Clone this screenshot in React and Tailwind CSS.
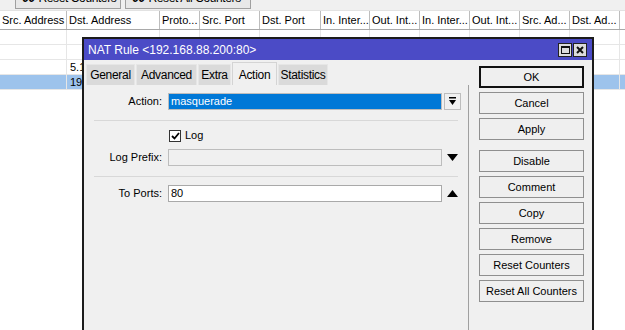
const COLS = [
  { w: 67, t: 'Src. Address' },
  { w: 93, t: 'Dst. Address' },
  { w: 40, t: 'Proto...' },
  { w: 60, t: 'Src. Port' },
  { w: 61, t: 'Dst. Port' },
  { w: 49, t: 'In. Inter...' },
  { w: 50, t: 'Out. Int...' },
  { w: 50, t: 'In. Inter...' },
  { w: 50, t: 'Out. Int...' },
  { w: 50, t: 'Src. Ad...' },
  { w: 50, t: 'Dst. Ad...' },
  { w: 30, t: '' },
];

const ROWS = [
  { dst: '', sel: false },
  { dst: '', sel: false },
  { dst: '5.1', sel: false },
  { dst: '19', sel: true },
];

const TABS = [
  { t: 'General', w: 49 },
  { t: 'Advanced', w: 61 },
  { t: 'Extra', w: 33 },
  { t: 'Action', w: 45, active: true },
  { t: 'Statistics', w: 50 },
];

const BUTTONS = [
  ['OK', 'Cancel', 'Apply'],
  ['Disable', 'Comment', 'Copy', 'Remove', 'Reset Counters', 'Reset All Counters'],
];

function Label({ children }) {
  return <div className="w-[78px] shrink-0 text-right">{children}</div>;
}

function Tri({ up }) {
  return (
    <svg width="11" height="7" viewBox="0 0 11 7" className="ml-[5px]">
      <path d={up ? 'M0 7 L5.5 0 L11 7 Z' : 'M0 0 L11 0 L5.5 7 Z'} fill="#000" />
    </svg>
  );
}

export default function App() {
  return (
    <div className="relative w-[625px] h-[330px] overflow-hidden bg-white text-[11px] text-black font-['Liberation_Sans',Arial,sans-serif]">
      {/* toolbar, mostly scrolled off */}
      <div className="h-[10px] bg-[#f0f0f0] overflow-hidden flex items-end gap-[4px] pl-[15px] pb-[1px] whitespace-nowrap">
        <div className="h-[22px] w-[106px] shrink-0 border border-[#a0a0a0] bg-[#e8e8e8] flex items-center pl-[6px] gap-[4px] text-[12px] tracking-[-0.4px]">
          <b>00</b> Reset Counters
        </div>
        <div className="h-[22px] w-[126px] shrink-0 border border-[#a0a0a0] bg-[#e8e8e8] flex items-center pl-[6px] gap-[4px] text-[12px] tracking-[-0.4px]">
          <b>00</b> Reset All Counters
        </div>
      </div>

      {/* table header */}
      <div className="flex h-[20px] bg-white border-b border-[#a9a9a9] border-t border-t-[#e2e2e2]">
        {COLS.map((c, i) => (
          <div
            key={i}
            style={{ width: c.w }}
            className="shrink-0 border-r border-[#bdbdbd] pl-[2px] leading-[18px] whitespace-nowrap overflow-hidden"
          >
            {c.t}
          </div>
        ))}
      </div>

      {ROWS.map((r, i) => (
        <div key={i} className={`flex h-[15px] border-b border-[#e6e6e6] ${r.sel ? 'bg-[#9dc3ec]' : ''}`}>
          {COLS.map((c, j) => (
            <div
              key={j}
              style={{ width: c.w }}
              className="shrink-0 border-r border-[#e6e6e6] pl-[3px] leading-[14px] whitespace-nowrap overflow-hidden"
            >
              {j === 1 ? r.dst : ''}
            </div>
          ))}
        </div>
      ))}

      {/* dialog window */}
      <div className="absolute left-[82px] top-[37px] w-[512px] h-[300px] border-2 border-[#1c1c1c] bg-[#f0f0f0] flex flex-col">
        <div className="h-[21px] shrink-0 bg-[#4b4bc6] flex items-center justify-between pl-[4px] pr-[5px]">
          <span className="text-white text-[12px]">NAT Rule &lt;192.168.88.200:80&gt;</span>
          <div className="flex gap-[1px] mt-[1px]">
            <div className="w-[14px] h-[14px] border border-[#222] bg-[#dcdcdc] flex items-center justify-center">
              <div className="w-[9px] h-[8px] border border-[#111] border-t-2" />
            </div>
            <div className="w-[14px] h-[14px] border border-[#222] bg-[#dcdcdc] flex items-center justify-center">
              <svg width="8" height="8" viewBox="0 0 8 8">
                <path d="M1 1 L7 7 M7 1 L1 7" stroke="#111" strokeWidth="2" />
              </svg>
            </div>
          </div>
        </div>

        <div className="flex flex-1">
          {/* left: tabs + form */}
          <div className="w-[385px] shrink-0 flex flex-col">
            <div className="h-[25px] flex items-end gap-[1px] pl-[2px] text-[12px] whitespace-nowrap">
              {TABS.map((t) => (
                <div
                  key={t.t}
                  style={{ width: t.w }}
                  className={`shrink-0 flex justify-center border border-b-0 tracking-[-0.3px] ${
                    t.active
                      ? 'h-[23px] bg-[#f0f0f0] border-[#d4d4d4] pt-[3px]'
                      : 'h-[21px] bg-[#dadada] border-[#e6e6e6] items-center'
                  }`}
                >
                  {t.t}
                </div>
              ))}
            </div>

            <div className="flex-1 border-r border-[#a0a0a0] pt-[8px]">
              <div className="flex items-center h-[17px]">
                <Label>Action:</Label>
                <div className="ml-[6px] w-[274px] h-[17px] border border-[#bdbdbd] bg-[#0078d7] text-white pl-[2px] leading-[15px]">
                  masquerade
                </div>
                <div className="ml-[2px] w-[17px] h-[17px] border border-[#bdbdbd] flex items-center justify-center">
                  <svg width="9" height="9" viewBox="0 0 9 9">
                    <rect x="1" y="0" width="7" height="1.5" fill="#000" />
                    <path d="M1 3 L8 3 L4.5 8 Z" fill="#000" />
                  </svg>
                </div>
              </div>

              <div className="ml-[10px] mt-[10px] w-[364px] h-[1px] bg-[#d8d8d8]" />

              <div className="flex items-center h-[13px] mt-[8px]">
                <div className="w-[78px] shrink-0" />
                <div className="ml-[7px] w-[12px] h-[12px] border border-[#333] bg-white flex items-center justify-center">
                  <svg width="9" height="8" viewBox="0 0 9 8">
                    <path d="M1 4 L3.5 6.5 L8 1" stroke="#000" strokeWidth="1.8" fill="none" />
                  </svg>
                </div>
                <span className="ml-[4px]">Log</span>
              </div>

              <div className="flex items-center h-[17px] mt-[7px]">
                <Label>Log Prefix:</Label>
                <div className="ml-[6px] w-[274px] h-[17px] border border-[#bdbdbd] bg-[#f0f0f0]" />
                <Tri />
              </div>

              <div className="ml-[10px] mt-[10px] w-[364px] h-[1px] bg-[#d8d8d8]" />

              <div className="flex items-center h-[17px] mt-[8px]">
                <Label>To Ports:</Label>
                <div className="ml-[6px] w-[274px] h-[17px] border border-[#a9a9a9] bg-white pl-[2px] leading-[15px]">
                  80
                </div>
                <Tri up />
              </div>
            </div>
          </div>

          {/* right: buttons */}
          <div className="pl-[10px] pt-[6px] flex flex-col gap-[10px]">
            {BUTTONS.map((group, gi) => (
              <div key={gi} className="flex flex-col gap-[4px]">
                {group.map((b) => (
                  <div
                    key={b}
                    className={`w-[105px] h-[22px] flex items-center justify-center bg-[#efefef] ${
                      b === 'OK' ? 'border-2 border-[#111]' : 'border border-[#8f8f8f]'
                    }`}
                  >
                    {b}
                  </div>
                ))}
              </div>
            ))}
          </div>
        </div>
      </div>
    </div>
  );
}
